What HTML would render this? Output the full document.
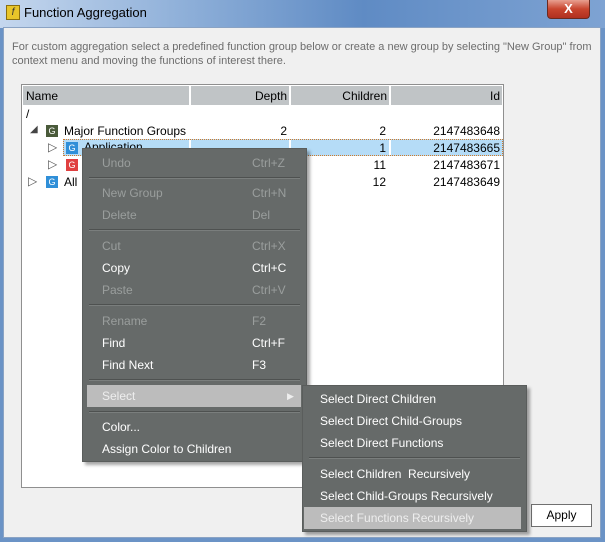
<!DOCTYPE html>
<html><head><style>
*{margin:0;padding:0;box-sizing:border-box}
body{width:605px;height:542px;overflow:hidden;background:#6b93c6;font-family:"Liberation Sans",sans-serif;font-size:12px;position:relative}
.abs{position:absolute}
.title{left:0;top:0;width:605px;height:28px;background:linear-gradient(90deg,#c5d7ee 0%,#8fb0d9 30%,#5f8bc4 60%,#7ea3d3 100%)}
.client{left:3px;top:27px;width:598px;height:511px;background:#f0f0f0;border:1px solid #8aa3c4}
.menu{background:#666a69;box-shadow:3px 3px 3px rgba(0,0,0,.35);border:1px solid #5a5d5c}
.mi{position:absolute;left:0;right:0;height:22px;line-height:22px;color:#fff;font-size:12px}
.mi.d{color:#9a9e9d}
.mi span{position:absolute}
.sep{position:absolute;left:6px;right:6px;height:2px;border-top:1px solid #4e5150;border-bottom:1px solid #7a7e7d}
.cell{position:absolute;font-size:12px;color:#000}
</style></head><body>
<div class="abs title"></div>
<div class="abs" style="left:6px;top:5px;width:14px;height:15px;background:#e8c52a;border:1px solid #8a6f10;font-size:10px;font-style:italic;line-height:13px;text-align:center;color:#333">f</div>
<div class="abs" style="left:24px;top:5px;font-size:13px;color:#000">Function Aggregation</div>
<div class="abs" style="left:547px;top:0;width:43px;height:19px;background:linear-gradient(#e8a090,#c8452e 50%,#b03020);border:1px solid #6b2a20;border-top:none;border-radius:0 0 4px 4px;color:#fff;font-weight:bold;text-align:center;line-height:18px;font-size:13px">X</div>
<div class="abs client"></div>
<div class="abs" style="left:12px;top:40px;width:585px;color:#6d6d6d;font-size:11px;line-height:14px">For custom aggregation select a predefined function group below or create a new group by selecting "New Group" from context menu and moving the functions of interest there.</div>
<div class="abs" style="left:21px;top:84px;width:483px;height:404px;background:#fff;border:1px solid #8f8f8f"></div>
<div class="abs" style="left:23px;top:86px;width:479px;height:19px;background:#c0c4c6"></div>
<div class="abs" style="left:189px;top:86px;width:2px;height:19px;background:#fff"></div>
<div class="abs" style="left:289px;top:86px;width:2px;height:19px;background:#fff"></div>
<div class="abs" style="left:389px;top:86px;width:2px;height:19px;background:#fff"></div>
<div class="cell" style="left:26px;top:89px">Name</div>
<div class="cell" style="left:200px;width:87px;text-align:right;top:89px">Depth</div>
<div class="cell" style="left:300px;width:87px;text-align:right;top:89px">Children</div>
<div class="cell" style="left:400px;width:100px;text-align:right;top:89px">Id</div>
<div class="cell" style="left:26px;top:107px">/</div>
<div class="cell" style="left:30px;top:124px;font-size:10px;color:#444">◢</div>
<div class="abs" style="left:46px;top:125px;width:12px;height:12px;background:#4a5a3a;color:#fff;font-size:9px;text-align:center;line-height:12px">G</div>
<div class="cell" style="left:64px;top:124px">Major Function Groups</div>
<div class="cell" style="left:200px;width:87px;text-align:right;top:124px">2</div>
<div class="cell" style="left:300px;width:86px;text-align:right;top:124px">2</div>
<div class="cell" style="left:400px;width:100px;text-align:right;top:124px">2147483648</div>
<div class="abs" style="left:63px;top:139px;width:440px;height:17px;background:#b5dcf7;border:1px dotted #d07a2a"></div>
<div class="abs" style="left:189px;top:140px;width:2px;height:15px;background:#fff"></div>
<div class="abs" style="left:289px;top:140px;width:2px;height:15px;background:#fff"></div>
<div class="abs" style="left:389px;top:140px;width:2px;height:15px;background:#fff"></div>
<div class="cell" style="left:48px;top:140px;color:#555">▷</div>
<div class="abs" style="left:66px;top:142px;width:12px;height:12px;background:#2f8fd8;color:#fff;font-size:9px;text-align:center;line-height:12px">G</div>
<div class="cell" style="left:84px;top:140px">Application</div>
<div class="cell" style="left:300px;width:86px;text-align:right;top:141px">1</div>
<div class="cell" style="left:400px;width:100px;text-align:right;top:141px">2147483665</div>
<div class="cell" style="left:48px;top:157px;color:#555">▷</div>
<div class="abs" style="left:66px;top:159px;width:12px;height:12px;background:#e04040;color:#fff;font-size:9px;text-align:center;line-height:12px">G</div>
<div class="cell" style="left:300px;width:86px;text-align:right;top:158px">11</div>
<div class="cell" style="left:400px;width:100px;text-align:right;top:158px">2147483671</div>
<div class="cell" style="left:28px;top:174px;color:#555">▷</div>
<div class="abs" style="left:46px;top:176px;width:12px;height:12px;background:#2f8fd8;color:#fff;font-size:9px;text-align:center;line-height:12px">G</div>
<div class="cell" style="left:64px;top:175px">All</div>
<div class="cell" style="left:300px;width:86px;text-align:right;top:175px">12</div>
<div class="cell" style="left:400px;width:100px;text-align:right;top:175px">2147483649</div>
<div class="abs" style="left:531px;top:504px;width:61px;height:23px;background:#fff;border:1px solid #707070;text-align:center;line-height:21px;font-size:12px">Apply</div>

<div class="abs menu" style="left:82px;top:148px;width:225px;height:314px">
<div class="mi d" style="top:3px"><span style="left:19px">Undo</span><span style="left:169px">Ctrl+Z</span></div>
<div class="sep" style="top:28px"></div>
<div class="mi d" style="top:33px"><span style="left:19px">New Group</span><span style="left:169px">Ctrl+N</span></div>
<div class="mi d" style="top:55px"><span style="left:19px">Delete</span><span style="left:169px">Del</span></div>
<div class="sep" style="top:80px"></div>
<div class="mi d" style="top:86px"><span style="left:19px">Cut</span><span style="left:169px">Ctrl+X</span></div>
<div class="mi" style="top:108px"><span style="left:19px">Copy</span><span style="left:169px">Ctrl+C</span></div>
<div class="mi d" style="top:130px"><span style="left:19px">Paste</span><span style="left:169px">Ctrl+V</span></div>
<div class="sep" style="top:155px"></div>
<div class="mi d" style="top:161px"><span style="left:19px">Rename</span><span style="left:169px">F2</span></div>
<div class="mi" style="top:183px"><span style="left:19px">Find</span><span style="left:169px">Ctrl+F</span></div>
<div class="mi" style="top:205px"><span style="left:19px">Find Next</span><span style="left:169px">F3</span></div>
<div class="sep" style="top:230px"></div>
<div class="mi" style="top:236px;left:4px;right:5px;background:#bcbcbc;color:#eee"><span style="left:15px">Select</span><span style="left:200px;font-size:9px">▶</span></div>
<div class="sep" style="top:262px"></div>
<div class="mi" style="top:267px"><span style="left:19px">Color...</span></div>
<div class="mi" style="top:289px"><span style="left:19px">Assign Color to Children</span></div>
</div>

<div class="abs menu" style="left:302px;top:385px;width:225px;height:147px">
<div class="mi" style="top:2px"><span style="left:17px">Select Direct Children</span></div>
<div class="mi" style="top:24px"><span style="left:17px">Select Direct Child-Groups</span></div>
<div class="mi" style="top:46px"><span style="left:17px">Select Direct Functions</span></div>
<div class="sep" style="top:71px"></div>
<div class="mi" style="top:77px"><span style="left:17px">Select Children&nbsp; Recursively</span></div>
<div class="mi" style="top:99px"><span style="left:17px">Select Child-Groups Recursively</span></div>
<div class="mi" style="top:121px;left:1px;right:5px;background:#bcbcbc;color:#eee"><span style="left:16px">Select Functions Recursively</span></div>
</div>
</body></html>
